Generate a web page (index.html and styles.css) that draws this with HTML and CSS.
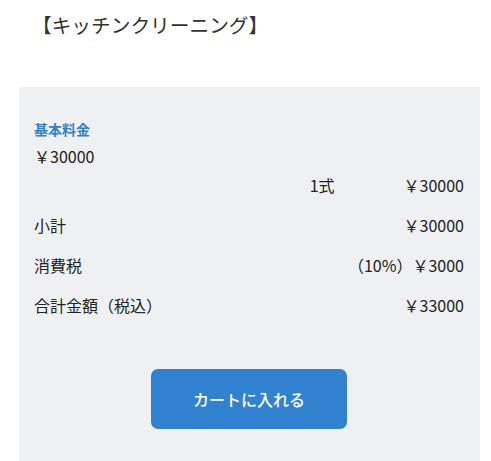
FILE: index.html
```html
<!DOCTYPE html>
<html lang="ja">
<head>
<meta charset="utf-8">
<link rel="stylesheet" href="styles.css">
</head>
<body>
<h1 class="title">【キッチンクリーニング】</h1>
<section class="panel">
  <div class="label">基本料金</div>
  <div class="base-price">￥30000</div>
  <div class="row row-first">
    <span class="qty">1式</span>
    <span class="amount">￥30000</span>
  </div>
  <div class="row">
    <span class="name">小計</span>
    <span class="amount">￥30000</span>
  </div>
  <div class="row">
    <span class="name">消費税</span>
    <span class="amount">（10%）￥3000</span>
  </div>
  <div class="row">
    <span class="name">合計金額（税込）</span>
    <span class="amount">￥33000</span>
  </div>
  <div class="actions">
    <button class="cart-btn" type="button">カートに入れる</button>
  </div>
</section>
</body>
</html>
```
FILE: styles.css
```css
html, body {
  margin: 0;
  padding: 0;
  background: #ffffff;
}
body {
  font-family: "Noto Sans CJK JP", "Noto Sans", sans-serif;
  color: #222222;
}
.title {
  margin: 0;
  padding: 11px 0 0 32px;
  height: 87px;
  box-sizing: border-box;
  font-size: 19.7px;
  font-weight: 400;
  line-height: 28px;
  color: #333333;
}
.panel {
  margin: 0 11px 0 19px;
  background: #eef0f2;
  padding: 32px 16px 40px 15px;
  min-height: 374px;
  box-sizing: border-box;
}
.label {
  font-size: 14px;
  font-weight: 700;
  line-height: 20px;
  color: #2f80cd;
}
.base-price {
  font-size: 16px;
  line-height: 26px;
  margin-top: 4px;
}
.row {
  display: flex;
  justify-content: space-between;
  align-items: center;
  font-size: 16px;
  line-height: 24px;
  margin-top: 16px;
}
.row-first {
  margin-top: 4px;
  justify-content: flex-end;
}
.qty {
  margin-right: 69px;
}
.actions {
  display: flex;
  justify-content: center;
  margin-top: 52px;
}
.cart-btn {
  width: 196px;
  height: 60px;
  border: none;
  border-radius: 7px;
  background: #3182ce;
  color: #ffffff;
  font-family: "Noto Sans CJK JP", "Noto Sans", sans-serif;
  font-size: 16px;
  font-weight: 500;
  cursor: pointer;
}
```
